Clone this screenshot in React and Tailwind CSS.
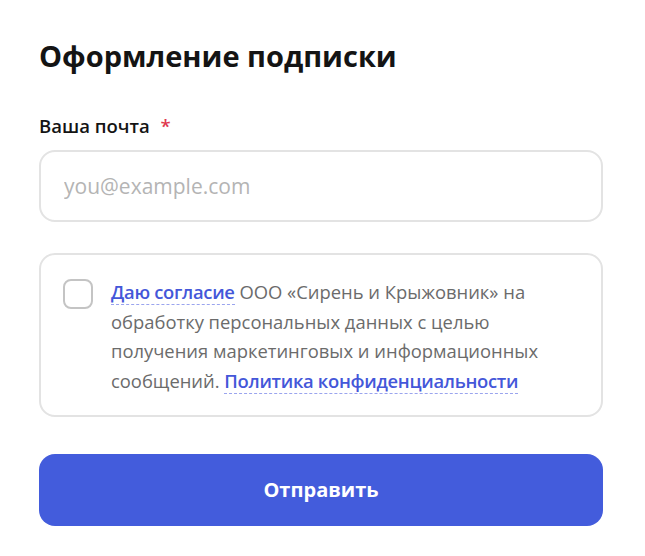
export default function App() {
  return (
    <div className="min-h-screen bg-white px-[39px] pt-[36px] font-['Open_Sans',sans-serif]">
      <div className="w-[564px]">
        <h1 className="text-[29px] font-bold leading-[40px] text-[#141414]">Оформление подписки</h1>

        <label className="mt-[37px] block text-[18.5px] font-semibold leading-[26px] text-[#141414]">
          Ваша почта <span className="ml-[6px] text-[#e0394f]">*</span>
        </label>
        <input
          type="email"
          placeholder="you@example.com"
          className="mt-[11px] block h-[72px] w-full rounded-[16px] border-2 border-[#e3e3e3] px-[23px] text-[21px] text-[#141414] outline-none placeholder:text-[#b4b4b4]"
        />

        <div className="mt-[31px] flex gap-[18px] rounded-[16px] border-2 border-[#e3e3e3] pb-[20px] pl-[22px] pr-[24px] pt-[22px]">
          <span className="mt-[2px] block h-[30px] w-[30px] shrink-0 rounded-[8px] border-2 border-[#c4c4c4] bg-white" />
          <p className="text-[18.4px] leading-[29.5px] text-[#6b6b6b]">
            <a className="border-b border-dashed border-[#9aa4ee] font-semibold tracking-[-0.3px] text-[#4457d9]">Даю согласие</a>{' '}
            ООО «Сирень и Крыжовник» на обработку персональных данных с целью получения маркетинговых и информационных
            сообщений.{' '}
            <a className="border-b border-dashed border-[#9aa4ee] font-semibold tracking-[-0.3px] text-[#4457d9]">Политика конфиденциальности</a>
          </p>
        </div>

        <button className="mt-[37px] flex h-[72px] w-full items-center justify-center rounded-[16px] bg-[#435cdc] text-[20px] font-bold text-white">
          Отправить
        </button>
      </div>
    </div>
  );
}
